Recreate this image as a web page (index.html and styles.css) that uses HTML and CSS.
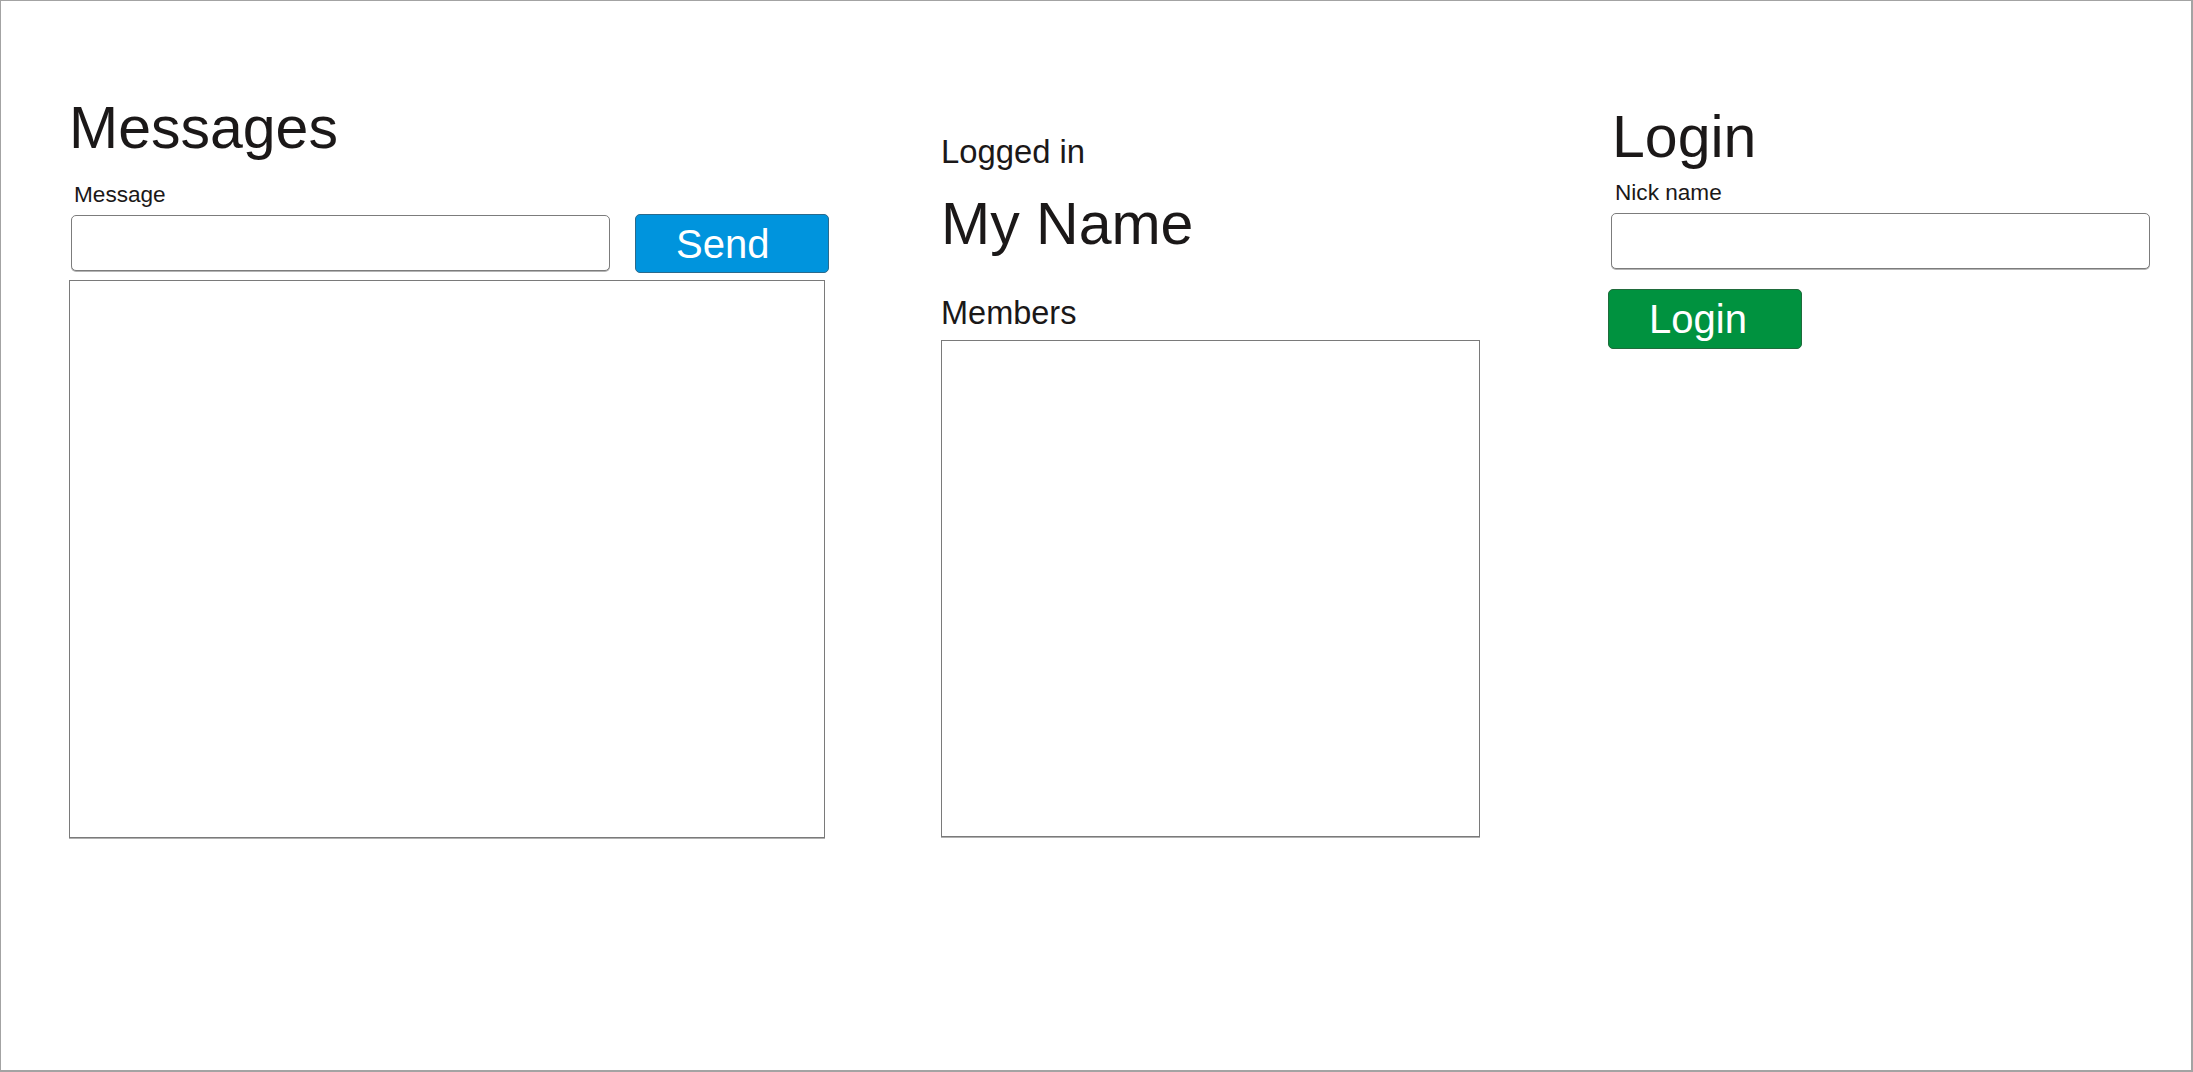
FILE: index.html
```html
<!DOCTYPE html>
<html lang="en">
<head>
<meta charset="utf-8">
<title>Chat</title>
<link rel="stylesheet" href="styles.css">
</head>
<body>
<div class="frame">
  <section class="col col-messages">
    <h1 class="title">Messages</h1>
    <label class="label label-message">Message</label>
    <div class="send-row">
      <input class="field" type="text">
      <button class="btn btn-send">Send</button>
    </div>
    <div class="box log"></div>
  </section>
  <section class="col col-members">
    <div class="status">Logged in</div>
    <div class="title name">My Name</div>
    <h2 class="section">Members</h2>
    <div class="box members"></div>
  </section>
  <section class="col col-login">
    <h1 class="title title-login">Login</h1>
    <label class="label label-nick">Nick name</label>
    <input class="field field-nick" type="text">
    <button class="btn btn-login">Login</button>
  </section>
</div>
</body>
</html>
```

FILE: styles.css
```css
html, body {
  margin: 0;
  padding: 0;
  background: #ffffff;
}

body {
  font-family: "Liberation Sans", Arial, sans-serif;
  color: #1b1818;
}

.frame {
  box-sizing: border-box;
  width: 2193px;
  height: 1072px;
  border: 1px solid #a3a3a3;
  border-right-width: 2px;
  border-bottom-width: 2px;
  padding-left: 68px;
  display: flex;
  align-items: flex-start;
}

.col {
  display: flex;
  flex-direction: column;
  align-items: flex-start;
}

.title {
  margin: 0;
  font-size: 59px;
  line-height: 59px;
  font-weight: normal;
}

.label {
  display: block;
  font-size: 22.6px;
  line-height: 22px;
}

.field {
  box-sizing: border-box;
  width: 539px;
  height: 56px;
  margin: 0;
  border: 1px solid #7c7c7c;
  border-radius: 5px;
  box-shadow: 0 1px 0 #b4b4b4;
  background: #fff;
  padding: 0 10px;
  font-family: inherit;
  font-size: 22px;
}

.btn {
  box-sizing: border-box;
  width: 194px;
  padding: 0 0 0 40px;
  margin: 0;
  text-align: left;
  font-family: inherit;
  font-size: 40px;
  line-height: 54px;
  color: #ffffff;
  border-radius: 5px;
  cursor: pointer;
}

.box {
  box-sizing: border-box;
  border: 1px solid #7a7a7a;
  box-shadow: 0 1px 0 #b0b0b0;
  background: #fff;
}

/* Messages column */
.col-messages {
  width: 756px;
  padding-top: 98px;
}

.label-message {
  margin-top: 26px;
  margin-left: 5px;
}

.send-row {
  display: flex;
  align-items: flex-start;
  gap: 25px;
  margin-top: 8px;
  margin-left: 2px;
}

.send-row .field {
  margin-top: 1px;
}

.btn-send {
  height: 59px;
  background: #0094dd;
  border: 1px solid #2b6a8c;
}

.log {
  width: 756px;
  height: 558px;
  margin-top: 7px;
}

/* Members column */
.col-members {
  width: 539px;
  margin-left: 116px;
  padding-top: 135px;
}

.status {
  font-size: 32.8px;
  line-height: 32px;
}

.name {
  margin-top: 27px;
}

.section {
  margin: 44px 0 0 0;
  font-size: 32.5px;
  line-height: 31px;
  font-weight: normal;
}

.members {
  width: 539px;
  height: 497px;
  margin-top: 11px;
}

/* Login column */
.col-login {
  width: 542px;
  margin-left: 128px;
  padding-top: 107px;
}

.title-login {
  margin-left: 4px;
}

.label-nick {
  margin-top: 15px;
  margin-left: 7px;
}

.field-nick {
  margin-top: 9px;
  margin-left: 3px;
}

.btn-login {
  height: 60px;
  margin-top: 20px;
  background: #00923f;
  border: 1px solid #1f6b3b;
}
```
